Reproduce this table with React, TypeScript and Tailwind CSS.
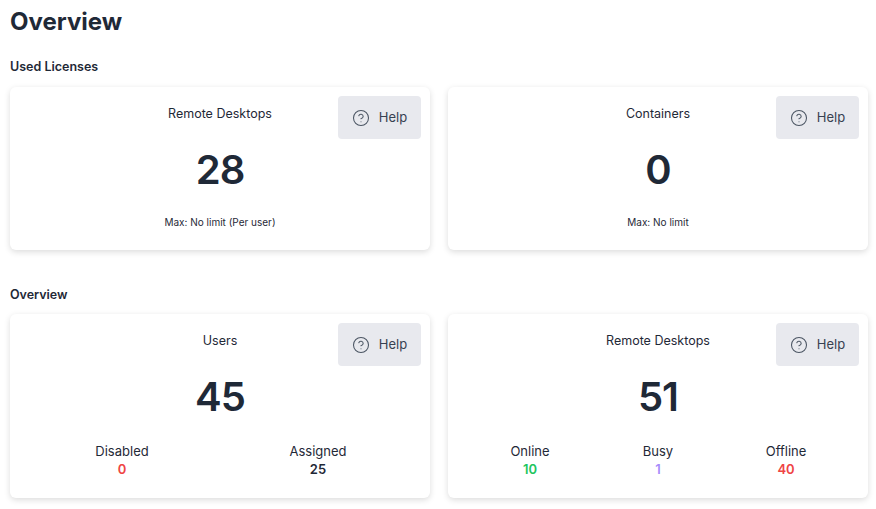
import React from "react";
import { CircleHelp } from "lucide-react";

type Stat = { label: string; value: number; color: string };

function HelpButton() {
    return (
        <button className="absolute top-[9px] right-[9px] w-[83px] h-[43px] rounded-[4px] bg-[#e8e9ee] flex items-center justify-center gap-[9px] text-[13px] text-[#374151]">
            <CircleHelp className="w-[18px] h-[18px] text-[#4b5563]" strokeWidth={1.4} />
            Help
        </button>
    );
}

function StatCard({
    title,
    value,
    footer,
    stats,
}: {
    title: string;
    value: number;
    footer?: string;
    stats?: Stat[];
}) {
    return (
        <div className="relative flex-1 bg-white rounded-[6px] shadow-[0_2px_6px_rgba(0,0,0,0.14)] pt-[17px] pb-[20px] flex flex-col items-center">
            <HelpButton />
            <div className="text-[12.5px] leading-5 text-[#1f2937]">{title}</div>
            <div className="mt-[22px] text-[40px] leading-[48px] font-semibold tracking-tight text-[#1f2937]">{value}</div>
            {footer && <div className="mt-[20px] text-[10px] leading-4 text-[#1f2937]">{footer}</div>}
            {stats && (
                <div
                    className={
                        stats.length === 3
                            ? "mt-[21px] w-full px-[18px] grid grid-cols-3"
                            : "mt-[21px] w-full px-[14px] grid grid-cols-2"
                    }
                >
                    {stats.map((s) => (
                        <div key={s.label} className="flex flex-col items-center">
                            <span className="text-[13px] leading-[18px] text-[#1f2937]">{s.label}</span>
                            <span className={`text-[13px] leading-[18px] font-semibold ${s.color}`}>{s.value}</span>
                        </div>
                    ))}
                </div>
            )}
        </div>
    );
}

export default function App() {
    return (
        <main className="min-h-screen bg-white pl-[10px] pr-[8px] pt-[6px] pb-4 text-[#1f2937] font-['Inter',sans-serif]">
            <h1 className="text-[24px] leading-8 font-bold">Overview</h1>

            <h2 className="mt-[19px] text-[12.5px] leading-5 font-semibold">Used Licenses</h2>
            <div className="mt-[10px] flex gap-[18px]">
                <StatCard title="Remote Desktops" value={28} footer="Max: No limit (Per user)" />
                <StatCard title="Containers" value={0} footer="Max: No limit" />
            </div>

            <h2 className="mt-[35px] text-[12.5px] leading-5 font-semibold">Overview</h2>
            <div className="mt-[9px] flex gap-[18px]">
                <StatCard
                    title="Users"
                    value={45}
                    stats={[
                        { label: "Disabled", value: 0, color: "text-[#ef4444]" },
                        { label: "Assigned", value: 25, color: "text-[#1f2937]" },
                    ]}
                />
                <StatCard
                    title="Remote Desktops"
                    value={51}
                    stats={[
                        { label: "Online", value: 10, color: "text-[#22c55e]" },
                        { label: "Busy", value: 1, color: "text-[#a78bfa]" },
                        { label: "Offline", value: 40, color: "text-[#ef4444]" },
                    ]}
                />
            </div>
        </main>
    );
}
